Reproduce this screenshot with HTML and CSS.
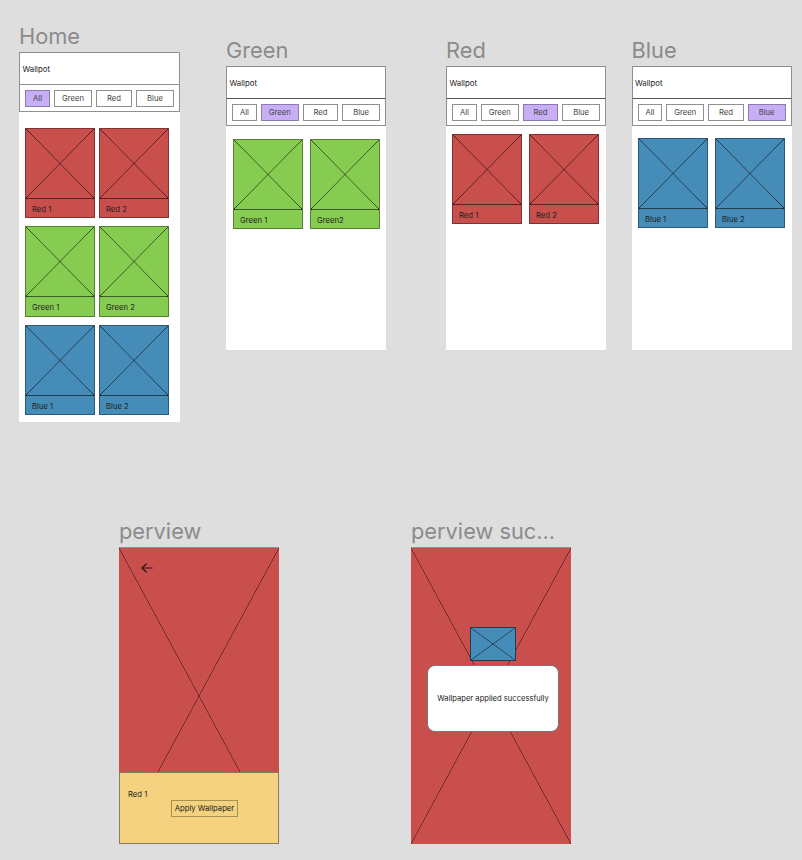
FILE: index.html
```html
<!DOCTYPE html>
<html lang="en">
<head>
  <meta charset="UTF-8">
  <link rel="stylesheet" href="styles.css">
  <title>Wallpot wireframes</title>
</head>
<body>
  <div class="canvas">

    <section class="frame home">
      <h2 class="frame-title">Home</h2>
      <div class="screen">
        <div class="app-title">Wallpot</div>
        <div class="tabs">
          <span class="tab tab-all active">All</span>
          <span class="tab tab-green">Green</span>
          <span class="tab tab-red">Red</span>
          <span class="tab tab-blue">Blue</span>
        </div>
        <div class="grid">
          <div class="card red"><div class="ph"></div><div class="card-label">Red 1</div></div>
          <div class="card red"><div class="ph"></div><div class="card-label">Red 2</div></div>
          <div class="card green"><div class="ph"></div><div class="card-label">Green 1</div></div>
          <div class="card green"><div class="ph"></div><div class="card-label">Green 2</div></div>
          <div class="card blue"><div class="ph"></div><div class="card-label">Blue 1</div></div>
          <div class="card blue"><div class="ph"></div><div class="card-label">Blue 2</div></div>
        </div>
      </div>
    </section>

    <section class="frame green-page">
      <h2 class="frame-title">Green</h2>
      <div class="screen">
        <div class="app-title">Wallpot</div>
        <div class="tabs">
          <span class="tab tab-all">All</span>
          <span class="tab tab-green active">Green</span>
          <span class="tab tab-red">Red</span>
          <span class="tab tab-blue">Blue</span>
        </div>
        <div class="grid">
          <div class="card green"><div class="ph"></div><div class="card-label">Green 1</div></div>
          <div class="card green"><div class="ph"></div><div class="card-label">Green2</div></div>
        </div>
      </div>
    </section>

    <section class="frame red-page">
      <h2 class="frame-title">Red</h2>
      <div class="screen">
        <div class="app-title">Wallpot</div>
        <div class="tabs">
          <span class="tab tab-all">All</span>
          <span class="tab tab-green">Green</span>
          <span class="tab tab-red active">Red</span>
          <span class="tab tab-blue">Blue</span>
        </div>
        <div class="grid">
          <div class="card red"><div class="ph"></div><div class="card-label">Red 1</div></div>
          <div class="card red"><div class="ph"></div><div class="card-label">Red 2</div></div>
        </div>
      </div>
    </section>

    <section class="frame blue-page">
      <h2 class="frame-title">Blue</h2>
      <div class="screen">
        <div class="app-title">Wallpot</div>
        <div class="tabs">
          <span class="tab tab-all">All</span>
          <span class="tab tab-green">Green</span>
          <span class="tab tab-red">Red</span>
          <span class="tab tab-blue active">Blue</span>
        </div>
        <div class="grid">
          <div class="card blue"><div class="ph"></div><div class="card-label">Blue 1</div></div>
          <div class="card blue"><div class="ph"></div><div class="card-label">Blue 2</div></div>
        </div>
      </div>
    </section>

    <section class="frame preview">
      <h2 class="frame-title">perview</h2>
      <div class="full ph red">
        <svg class="back" width="12" height="10" viewBox="0 0 12 10" fill="none" stroke="#2a1414" stroke-width="1.2">
          <path d="M11.5 5H1M5.5 .8 1 5l4.5 4.2"/>
        </svg>
        <div class="apply-panel">
          <div class="apply-name">Red 1</div>
          <span class="apply-btn">Apply Wallpaper</span>
        </div>
      </div>
    </section>

    <section class="frame success">
      <h2 class="frame-title">perview suc...</h2>
      <div class="full ph red">
        <div class="mini ph blue"></div>
        <div class="dialog">Wallpaper applied successfully</div>
      </div>
    </section>

  </div>
</body>
</html>
```

FILE: styles.css
```css
* {
  box-sizing: border-box;
}
body {
  margin: 0;
  background-color: #dedede;
  font-family: 'Inter', 'Liberation Sans', sans-serif;
  color: #222;
}
.canvas {
  position: relative;
  width: 802px;
  height: 860px;
  overflow: hidden;
}

/* frames sit on a free canvas, like in the design tool */
.frame {
  position: absolute;
  width: 160px;
}
.home { left: 19px; top: 22px; width: 161px; }
.green-page { left: 226px; top: 36px; }
.red-page { left: 446px; top: 36px; }
.blue-page { left: 631.5px; top: 36px; }
.preview { left: 119px; top: 517px; }
.success { left: 411px; top: 517px; }

.frame-title {
  margin: 0;
  height: 30px;
  font-size: 21.8px;
  line-height: 28px;
  font-weight: 400;
  color: #8b8b8b;
  white-space: nowrap;
}

.screen {
  background-color: #fff;
  height: 284px;
}
.home .screen {
  height: 370px;
}
.app-title {
  height: 33px;
  padding-left: 2.5px;
  border: 1px solid #8f8f8f;
  border-bottom-color: #555;
  font-size: 7.8px;
  line-height: 32px;
}
.home .app-title {
  border-bottom-color: #8f8f8f;
  line-height: 33px;
}
.tabs {
  display: flex;
  height: 27px;
  padding: 5px 5px 0 5px;
  border: 1px solid #8f8f8f;
  border-top: none;
}
.tab {
  height: 17px;
  margin-right: 4px;
  border: 1px solid #8f8f8f;
  background-color: #fff;
  font-size: 7.7px;
  line-height: 15px;
  text-align: center;
  color: #444;
}
.tab.active {
  background-color: #c7aef5;
  border-color: #8d7bb0;
}
.tab-all { width: 25px; }
.tab-green { width: 38px; }
.tab-red { width: 36px; }
.tab-blue { width: 38px; margin-right: 0; }

.grid {
  display: grid;
  grid-template-columns: 70px 70px;
  column-gap: 7px;
  padding: 13px 0 0 7px;
}
.home .grid {
  column-gap: 4px;
  row-gap: 8.3px;
  padding: 16px 0 0 6px;
}
.red-page .grid {
  padding: 8px 0 0 6px;
}
.blue-page .grid {
  padding: 11.5px 0 0 6.5px;
}

.red { background-color: #c84f4b; }
.green { background-color: #86cc50; }
.blue { background-color: #458cb8; }

.card {
  height: 90.2px;
  border: 1px solid rgba(0, 0, 0, 0.36);
}
.ph {
  background-image:
    linear-gradient(to top right, transparent calc(50% - 0.6px), rgba(20, 10, 10, 0.7) 50%, transparent calc(50% + 0.6px)),
    linear-gradient(to bottom right, transparent calc(50% - 0.6px), rgba(20, 10, 10, 0.7) 50%, transparent calc(50% + 0.6px));
}
.card .ph {
  height: 70px;
  border-bottom: 1px solid rgba(0, 0, 0, 0.55);
}
.card-label {
  padding-left: 6px;
  font-size: 7.7px;
  line-height: 21px;
}

.full {
  position: relative;
  height: 297px;
  border-top: 1px solid #8f8f8f;
}
.back {
  position: absolute;
  left: 22px;
  top: 15px;
}
.apply-panel {
  position: absolute;
  left: 0;
  right: 0;
  bottom: 0;
  height: 72px;
  border: 1px solid #8a7d58;
  background-color: #f4d27f;
  font-size: 7.7px;
}
.apply-name {
  padding: 17px 0 0 8px;
  line-height: 10px;
}
.apply-btn {
  display: block;
  width: 67px;
  height: 17px;
  margin: 0 0 0 51px;
  border: 1px solid #a8904f;
  line-height: 15px;
  text-align: center;
  white-space: nowrap;
}

.mini {
  position: absolute;
  left: 59px;
  top: 79px;
  width: 46px;
  height: 34px;
  border: 1px solid #1d3f55;
}
.dialog {
  position: absolute;
  left: 16px;
  top: 117px;
  width: 132px;
  height: 67px;
  border: 1px solid #777;
  border-radius: 8px;
  background-color: #fff;
  font-size: 7.6px;
  line-height: 65px;
  text-align: center;
  white-space: nowrap;
}
```
